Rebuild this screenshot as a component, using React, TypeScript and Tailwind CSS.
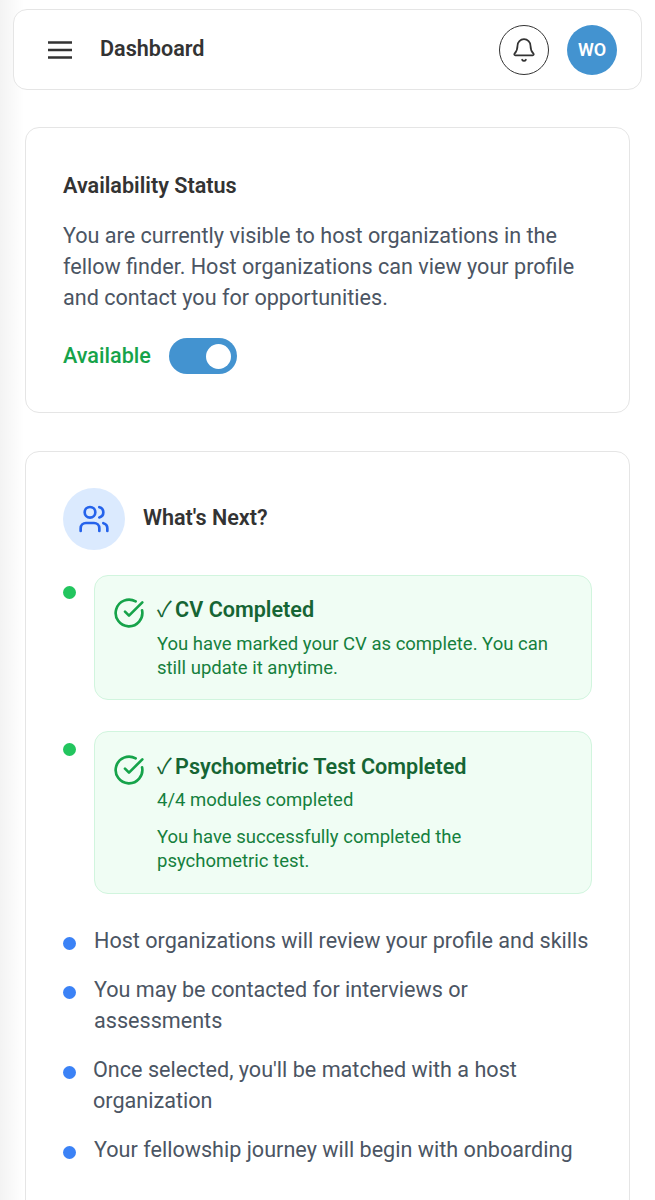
import { Bell, Users } from "lucide-react";

const steps = [
  { text: "Host organizations will review your profile and skills", gap: "gap-[18px]" },
  { text: "You may be contacted for interviews or assessments", gap: "gap-[18px]" },
  { text: "Once selected, you'll be matched with a host organization", gap: "gap-[17px]" },
  { text: "Your fellowship journey will begin with onboarding", gap: "gap-[18px]" },
];

function CheckIcon() {
  return (
    <svg viewBox="0 0 24 24" className="w-[32px] h-[32px] shrink-0 text-[#16a34a] mt-[2px]" fill="none" stroke="currentColor" strokeWidth="2" strokeLinecap="round" strokeLinejoin="round">
      <path d="M21.8 10A10 10 0 1 1 17 3.34" />
      <path d="m9 11 3 3L22 4" />
    </svg>
  );
}

function Tick() {
  return <span className="inline-block -mr-[2px] font-normal font-['Noto_Sans_CJK_SC',sans-serif]">✓</span>;
}

export default function App() {
  return (
    <div className="h-[1200px] overflow-hidden bg-gradient-to-r from-[#f3f3f3] to-white to-[24px] font-['Roboto',sans-serif] text-[#4b5563]">
      <header className="mt-[9px] ml-[13px] w-[629px] h-[81px] rounded-[14px] border border-[#e5e5e5] bg-white flex items-center pl-[34px] pr-[24px]">
        <svg viewBox="0 0 24 18" className="w-[24px] h-[18px] text-[#333]" fill="none" stroke="currentColor" strokeWidth="2.6">
          <path d="M0 1.5h24M0 9h24M0 16.5h24" />
        </svg>
        <h1 className="ml-[28px] text-[21.6px] font-semibold text-[#333]">Dashboard</h1>
        <button className="ml-auto w-[50px] h-[50px] rounded-full border border-[#333] flex items-center justify-center">
          <Bell className="w-[26px] h-[26px] text-[#333]" strokeWidth={1.6} />
        </button>
        <div className="ml-[18px] w-[50px] h-[50px] rounded-full bg-[#4393d0] flex items-center justify-center text-white font-semibold text-[18px]">WO</div>
      </header>

      <section className="mt-[37px] ml-[25px] w-[605px] h-[286px] rounded-[14px] border border-[#e5e5e5] bg-white pt-[44px] px-[37px]">
        <h2 className="text-[21.6px] leading-[28px] font-semibold text-[#333]">Availability Status</h2>
        <p className="mt-[20px] text-[21.6px] leading-[31px]">You are currently visible to host organizations in the fellow finder. Host organizations can view your profile and contact you for opportunities.</p>
        <div className="mt-[25px] flex items-center gap-[18px]">
          <span className="text-[21.6px] font-medium text-[#16a34a]">Available</span>
          <div className="w-[68px] h-[36px] rounded-full bg-[#4393d0] flex items-center justify-end pr-[6px]">
            <div className="w-[25px] h-[25px] rounded-full bg-white" />
          </div>
        </div>
      </section>

      <section className="mt-[38px] ml-[25px] w-[605px] h-[780px] rounded-[14px] border border-[#e5e5e5] bg-white pt-[36px] px-[37px]">
        <div className="flex items-center gap-[18px]">
          <div className="w-[62px] h-[62px] rounded-full bg-[#dbeafe] flex items-center justify-center">
            <Users className="w-[32px] h-[32px] text-[#2563eb]" strokeWidth={2} />
          </div>
          <h2 className="pb-[2px] text-[21.6px] font-semibold text-[#333]">What's Next?</h2>
        </div>

        <div className="mt-[25px] flex items-start gap-[18px]">
          <span className="mt-[11px] w-[13px] h-[13px] rounded-full bg-[#22c55e] shrink-0" />
          <div className="w-[498px] h-[125px] rounded-[14px] border border-[#d1f5de] bg-[#f0fdf4] pt-[19px] pl-[18px] flex gap-[12px]">
            <CheckIcon />
            <div>
              <h3 className="-mt-[1px] text-[21.6px] leading-[28px] font-semibold text-[#166534]"><Tick /> CV Completed</h3>
              <p className="mt-[8px] text-[18.5px] leading-[24px] text-[#15803d] w-[420px]">You have marked your CV as complete. You can still update it anytime.</p>
            </div>
          </div>
        </div>

        <div className="mt-[31px] flex items-start gap-[18px]">
          <span className="mt-[12px] w-[13px] h-[13px] rounded-full bg-[#22c55e] shrink-0" />
          <div className="w-[498px] h-[163px] rounded-[14px] border border-[#d1f5de] bg-[#f0fdf4] pt-[20px] pl-[18px] flex gap-[12px]">
            <CheckIcon />
            <div>
              <h3 className="-mt-[1px] text-[21.6px] leading-[28px] font-semibold text-[#166534]"><Tick /> Psychometric Test Completed</h3>
              <p className="mt-[7px] text-[18.5px] leading-[24px] text-[#15803d]">4/4 modules completed</p>
              <p className="mt-[13px] text-[18.5px] leading-[24px] text-[#15803d] w-[340px]">You have successfully completed the psychometric test.</p>
            </div>
          </div>
        </div>

        <ul className="mt-[31px] flex flex-col gap-[18px]">
          {steps.map((s) => (
            <li key={s.text} className={`flex items-start ${s.gap}`}>
              <span className="mt-[12px] w-[13px] h-[13px] rounded-full bg-[#3b82f6] shrink-0" />
              <span className="text-[21.6px] leading-[31px]">{s.text}</span>
            </li>
          ))}
        </ul>
      </section>
    </div>
  );
}
